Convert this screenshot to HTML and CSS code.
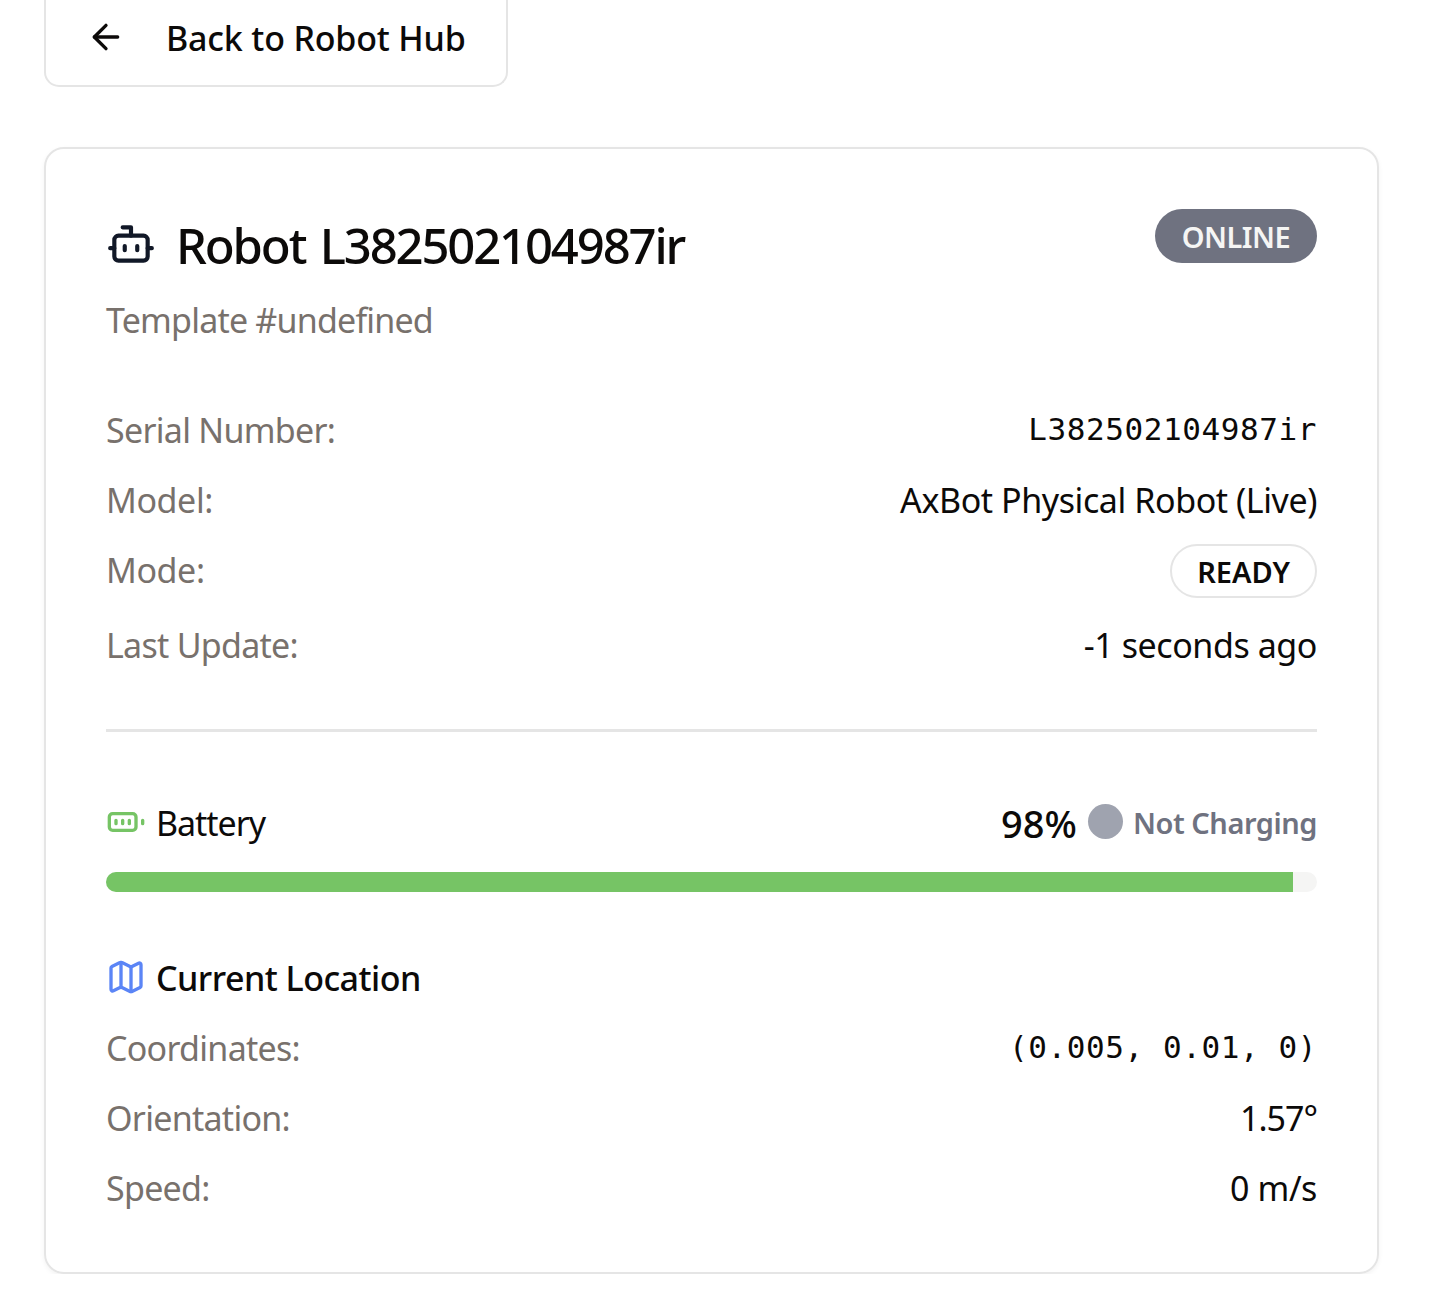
FILE: index.html
```html
<!DOCTYPE html>
<html lang="en">
<head>
<meta charset="utf-8">
<title>Robot L382502104987ir</title>
<link rel="stylesheet" href="styles.css">
</head>
<body>
<main class="page">
  <a class="back">
    <svg class="icon" viewBox="0 0 24 24"><path d="m12 19-7-7 7-7"/><path d="M19 12H5"/></svg>
    <span>Back to Robot Hub</span>
  </a>
  <section class="card">
    <header class="head">
      <div>
        <h1 class="title">
          <svg class="icon icon-bot" viewBox="0 0 24 24"><path d="M12 8V4H8"/><rect width="16" height="12" x="4" y="8" rx="2"/><path d="M2 14h2M20 14h2M15 13v2M9 13v2"/></svg>
          <span>Robot L382502104987ir</span>
        </h1>
        <p class="subtitle">Template #undefined</p>
      </div>
      <span class="badge badge-solid">ONLINE</span>
    </header>
    <div class="rows">
      <div class="row"><span class="label">Serial Number:</span><span class="mono">L382502104987ir</span></div>
      <div class="row"><span class="label label-short">Model:</span><span class="value">AxBot Physical Robot (Live)</span></div>
      <div class="row"><span class="label label-short">Mode:</span><span class="badge badge-outline">READY</span></div>
      <div class="row"><span class="label">Last Update:</span><span class="value">-1 seconds ago</span></div>
    </div>
    <hr class="rule">
    <div class="battery">
      <div class="battery-name">
        <svg class="icon icon-battery" viewBox="0 0 24 24"><rect width="16" height="10" x="2" y="7" rx="2"/><path d="M22 11v2M6 11v2M10 11v2M14 11v2"/></svg>
        <span class="battery-label">Battery</span>
      </div>
      <div class="battery-state">
        <span class="percent">98%</span>
        <span class="dot"></span>
        <span class="charging">Not Charging</span>
      </div>
    </div>
    <div class="bar"><div class="bar-fill" style="width:98%"></div></div>
    <h2 class="location">
      <svg class="icon icon-map" viewBox="0 0 24 24"><path d="M14.106 5.553a2 2 0 0 0 1.788 0l3.659-1.83A1 1 0 0 1 21 4.619v12.764a1 1 0 0 1-.553.894l-4.553 2.277a2 2 0 0 1-1.788 0l-4.212-2.106a2 2 0 0 0-1.788 0l-3.659 1.83A1 1 0 0 1 3 19.381V6.618a1 1 0 0 1 .553-.894l4.553-2.277a2 2 0 0 1 1.788 0z"/><path d="M15 5.764v15M9 3.236v15"/></svg>
      <span>Current Location</span>
    </h2>
    <div class="rows">
      <div class="row"><span class="label">Coordinates:</span><span class="mono">(0.005, 0.01, 0)</span></div>
      <div class="row"><span class="label">Orientation:</span><span class="value angle">1.57°</span></div>
      <div class="row"><span class="label">Speed:</span><span class="value">0 m/s</span></div>
    </div>
  </section>
</main>
</body>
</html>
```
FILE: styles.css
```css
* { box-sizing: border-box; margin: 0; }
html { overflow: hidden; }
body {
  background: #fff;
  color: #0c0a09;
  font: 34px/50px "Noto Sans", "Open Sans", sans-serif;
}
.page { padding: 0 51px 0 44px; white-space: nowrap; }
.icon {
  flex: none;
  width: 40px;
  height: 40px;
  fill: none;
  stroke: currentColor;
  stroke-width: 2;
  stroke-linecap: round;
  stroke-linejoin: round;
}
.back {
  display: flex;
  gap: 40px;
  width: 464px;
  height: 87px;
  padding: 13px 0 0 40px;
  border: 2px solid #e5e5e5;
  border-top: 0;
  border-radius: 0 0 15px 15px;
  font-weight: 500;
  letter-spacing: -.18px;
}
.back .icon { margin-top: 4px; }
.card {
  margin-top: 60px;
  height: 1127px;
  padding: 60px;
  border: 2px solid #e5e5e5;
  border-radius: 20px;
  box-shadow: 0 2px 5px rgba(0, 0, 0, .05);
}
.head { display: flex; justify-content: space-between; align-items: flex-start; height: 196px; }
.title {
  display: flex;
  gap: 20px;
  padding-top: 10px;
  font-size: 49px;
  font-weight: 500;
  line-height: 52px;
  letter-spacing: -2.15px;
  word-spacing: 4px;
}
.icon-bot { width: 50px; height: 50px; color: #111827; }
.subtitle { margin-top: 24px; color: #78716c; letter-spacing: -.8px; }
.label { color: #78716c; letter-spacing: -.72px; }
.label-short { letter-spacing: -.4px; }
.value { letter-spacing: -.42px; }
.angle { letter-spacing: -1px; }
.badge { height: 54px; border-radius: 27px; font-size: 29px; font-weight: 600; line-height: 55px; text-align: center; }
.badge-solid { width: 162px; background: #6f7280; color: #f5f5f4; letter-spacing: -.5px; }
.badge-outline { width: 147px; margin-top: -1px; border: 2px solid #e5e5e5; line-height: 51px; }
.rows { display: flex; flex-direction: column; gap: 20px; }
.row { display: flex; justify-content: space-between; }
.row:nth-child(4) { padding-top: 2px; margin-bottom: -2px; }
.mono { font-family: "DejaVu Sans Mono", monospace; font-size: 31px; line-height: 48px; letter-spacing: .59px; }
.rule { height: 3px; margin: 61px 0 60px; border: 0; background: #e5e5e5; }
.battery { display: flex; justify-content: space-between; height: 60px; padding-top: 6px; }
.battery-name { display: flex; gap: 10px; }
.battery-label { letter-spacing: -1.05px; }
.icon-battery { margin-top: 4px; color: #76c465; }
.battery-state { display: flex; gap: 10px; }
.percent { margin-right: 1px; font-size: 38px; font-weight: 500; }
.dot { width: 35px; height: 35px; margin-top: 6px; border-radius: 50%; background: #9fa3af; }
.charging { color: #6f7280; font-size: 29px; font-weight: 600; letter-spacing: -.45px; }
.bar { height: 20px; margin-top: 20px; overflow: hidden; border-radius: 10px; background: #f5f5f4; }
.bar-fill { height: 20px; background: #76c465; }
.location { display: flex; gap: 10px; margin: 61px 0 20px; font-size: 34px; font-weight: 500; letter-spacing: -.52px; }
.icon-map { margin-top: 4px; color: #5b85f6; }
```
